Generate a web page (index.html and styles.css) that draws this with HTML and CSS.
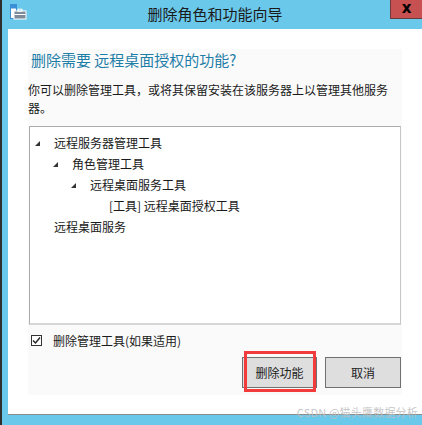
FILE: index.html
```html
<!DOCTYPE html>
<html lang="zh-CN">
<head>
<meta charset="utf-8">
<title>删除角色和功能向导</title>
<link rel="stylesheet" href="styles.css">
</head>
<body>
<div class="frame">
  <div class="titlebar">
    <svg class="app-icon" width="18" height="16" viewBox="0 0 18 16">
      <rect x="0.5" y="0.5" width="6" height="14" fill="#ffffff" stroke="#3b8fd6"/>
      <rect x="0.5" y="0.5" width="6" height="4" fill="#3b8fd6"/>
      <rect x="4" y="7" width="12" height="8" fill="#7d8b99" stroke="#ffffff" stroke-width="1"/>
      <rect x="8" y="5.2" width="4" height="2" fill="none" stroke="#ffffff" stroke-width="1"/>
      <line x1="4.5" y1="10.5" x2="15.5" y2="10.5" stroke="#ffffff" stroke-width="1"/>
    </svg>
    <div class="title">删除角色和功能向导</div>
    <div class="close">x</div>
  </div>
  <div class="client">
    <div class="panel">
      <h1 class="heading">删除需要 远程桌面授权的功能?</h1>
      <p class="desc">你可以删除管理工具，或将其保留安装在该服务器上以管理其他服务器。</p>
      <div class="listbox">
        <div class="row lv0"><span class="toggle"><i class="tri"></i></span><span>远程服务器管理工具</span></div>
        <div class="row lv1"><span class="toggle"><i class="tri"></i></span><span>角色管理工具</span></div>
        <div class="row lv2"><span class="toggle"><i class="tri"></i></span><span>远程桌面服务工具</span></div>
        <div class="row lv3"><span class="toggle"></span><span>[工具] 远程桌面授权工具</span></div>
        <div class="row lv0"><span class="toggle"></span><span>远程桌面服务</span></div>
      </div>
      <label class="check-row">
        <span class="checkbox">
          <svg width="9" height="9" viewBox="0 0 9 9"><path d="M1 4.5 L3.5 7 L8 1.5" fill="none" stroke="#222" stroke-width="1.4"/></svg>
        </span>
        <span>删除管理工具(如果适用)</span>
      </label>
      <div class="buttons">
        <div class="btn primary">删除功能<span class="highlight"></span></div>
        <div class="btn">取消</div>
      </div>
    </div>
  </div>
  <div class="watermark">CSDN @猫头鹰数据分析</div>
</div>
</body>
</html>
```

FILE: styles.css
```css
* { box-sizing: border-box; }
html, body {
  margin: 0;
  padding: 0;
  width: 422px;
  height: 425px;
  overflow: hidden;
  font-family: "Noto Sans CJK SC", "Noto Sans", "Liberation Sans", sans-serif;
}
.frame {
  position: relative;
  height: 425px;
  background: #6ac8ea;
  border-left: 2px solid #2e2e2e;
  padding-left: 6px;
  display: flex;
  flex-direction: column;
}
.titlebar {
  position: relative;
  height: 29px;
  flex: none;
  display: flex;
  align-items: center;
  justify-content: center;
}
.app-icon {
  position: absolute;
  left: 2px;
  top: 4px;
}
.title {
  font-size: 15px;
  color: #1a1a1a;
  line-height: 20px;
  margin-top: -2px;
}
.close {
  position: absolute;
  right: 0;
  top: 0;
  width: 32px;
  height: 19px;
  background: #c75050;
  border-left: 1px solid #6b3a3a;
  border-bottom: 1px solid #6b3a3a;
  color: #000;
  font-family: "DejaVu Sans", sans-serif;
  font-weight: bold;
  font-size: 15px;
  line-height: 16px;
  text-align: center;
}
.client {
  background: #ffffff;
  height: 386px;
  flex: none;
  border-bottom: 1px solid #8c8c8c;
  padding: 20px 20px 0 20px;
}
.panel {
  background: #fafafa;
  height: 346px;
  display: flex;
  flex-direction: column;
}
.heading {
  margin: 0;
  padding-left: 3px;
  font-size: 15px;
  font-weight: normal;
  line-height: 20px;
  height: 20px;
  margin-top: 1px;
  color: #1f7ea8;
}
.desc {
  margin: 11px 0 0 0;
  font-size: 12px;
  line-height: 18px;
  color: #1a1a1a;
  padding-right: 8px;
}
.listbox {
  margin: 9px 1px 0 1px;
  height: 199px;
  background: #ffffff;
  border: 1px solid #acacac;
  border-right-color: #c8c8c8;
  border-bottom: 2px solid #d6d6d6;
  padding-top: 5px;
}
.row {
  display: flex;
  align-items: center;
  height: 21px;
  font-size: 12px;
  color: #1a1a1a;
}
.lv0 { padding-left: 5px; }
.lv1 { padding-left: 23px; }
.lv2 { padding-left: 41px; }
.lv3 { padding-left: 60px; }
.toggle {
  width: 19px;
  flex: none;
  display: flex;
  align-items: center;
}
.tri {
  display: block;
  width: 0;
  height: 0;
  border-left: 5px solid transparent;
  border-bottom: 5px solid #333;
  margin-top: 1px;
}
.check-row {
  display: flex;
  align-items: center;
  height: 16px;
  margin-top: 7px;
  padding-left: 3px;
  font-size: 12px;
  color: #1a1a1a;
}
.checkbox {
  width: 11px;
  height: 11px;
  border: 1px solid #333;
  background: #fff;
  margin-right: 11px;
  display: flex;
  align-items: center;
  justify-content: center;
}
.buttons {
  display: flex;
  justify-content: flex-end;
  gap: 8px;
  margin-top: 9px;
  padding-right: 1px;
}
.btn {
  position: relative;
  width: 76px;
  height: 31px;
  background: #dedede;
  border: 1px solid #707070;
  font-size: 12px;
  color: #222;
  display: flex;
  align-items: center;
  justify-content: center;
}
.btn.primary { width: 75px; }
.highlight {
  position: absolute;
  left: 1px;
  top: -7px;
  width: 72px;
  height: 41px;
  border: 3px solid #f23c3c;
}
.watermark {
  position: absolute;
  right: 4px;
  bottom: 6px;
  font-size: 11px;
  line-height: 13px;
  color: rgba(190, 190, 190, 0.9);
  letter-spacing: 0.2px;
}
```
